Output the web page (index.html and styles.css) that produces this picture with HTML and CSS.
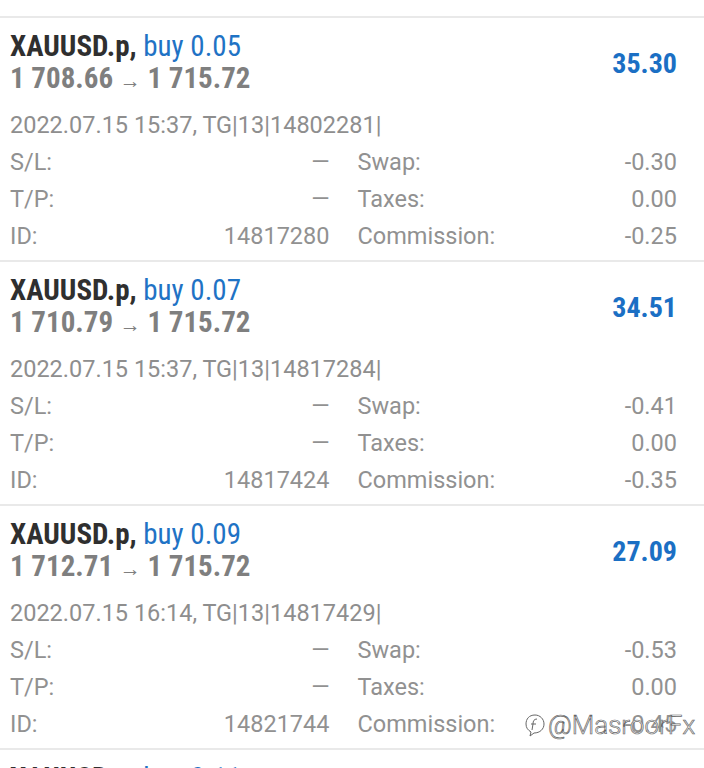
FILE: index.html
```html
<!DOCTYPE html>
<html lang="en">
<head>
    <meta charset="UTF-8">
    <meta name="viewport" content="width=device-width, initial-scale=1.0">
    <title>History</title>
    <link rel="stylesheet" href="styles.css">
</head>
<body>
    <div class="deal-list">
        <div class="deal">
            <div class="deal-head">
                <div class="deal-title">
                    <div class="symbol">XAUUSD.p, <span class="side">buy 0.05</span></div>
                    <div class="prices">1 708.66 <span class="arrow">&rarr;</span> 1 715.72</div>
                </div>
                <div class="profit">35.30</div>
            </div>
            <div class="deal-time">2022.07.15 15:37, TG|13|14802281|</div>
            <div class="deal-info">
                <div class="info-col">
                    <div class="info-row"><span>S/L:</span><span>&mdash;</span></div>
                    <div class="info-row"><span>T/P:</span><span>&mdash;</span></div>
                    <div class="info-row"><span>ID:</span><span>14817280</span></div>
                </div>
                <div class="info-col">
                    <div class="info-row"><span>Swap:</span><span>-0.30</span></div>
                    <div class="info-row"><span>Taxes:</span><span>0.00</span></div>
                    <div class="info-row"><span>Commission:</span><span>-0.25</span></div>
                </div>
            </div>
        </div>

        <div class="deal">
            <div class="deal-head">
                <div class="deal-title">
                    <div class="symbol">XAUUSD.p, <span class="side">buy 0.07</span></div>
                    <div class="prices">1 710.79 <span class="arrow">&rarr;</span> 1 715.72</div>
                </div>
                <div class="profit">34.51</div>
            </div>
            <div class="deal-time">2022.07.15 15:37, TG|13|14817284|</div>
            <div class="deal-info">
                <div class="info-col">
                    <div class="info-row"><span>S/L:</span><span>&mdash;</span></div>
                    <div class="info-row"><span>T/P:</span><span>&mdash;</span></div>
                    <div class="info-row"><span>ID:</span><span>14817424</span></div>
                </div>
                <div class="info-col">
                    <div class="info-row"><span>Swap:</span><span>-0.41</span></div>
                    <div class="info-row"><span>Taxes:</span><span>0.00</span></div>
                    <div class="info-row"><span>Commission:</span><span>-0.35</span></div>
                </div>
            </div>
        </div>

        <div class="deal">
            <div class="deal-head">
                <div class="deal-title">
                    <div class="symbol">XAUUSD.p, <span class="side">buy 0.09</span></div>
                    <div class="prices">1 712.71 <span class="arrow">&rarr;</span> 1 715.72</div>
                </div>
                <div class="profit">27.09</div>
            </div>
            <div class="deal-time">2022.07.15 16:14, TG|13|14817429|</div>
            <div class="deal-info">
                <div class="info-col">
                    <div class="info-row"><span>S/L:</span><span>&mdash;</span></div>
                    <div class="info-row"><span>T/P:</span><span>&mdash;</span></div>
                    <div class="info-row"><span>ID:</span><span>14821744</span></div>
                </div>
                <div class="info-col">
                    <div class="info-row"><span>Swap:</span><span>-0.53</span></div>
                    <div class="info-row"><span>Taxes:</span><span>0.00</span></div>
                    <div class="info-row"><span>Commission:</span><span>-0.45</span></div>
                </div>
            </div>
        </div>

        <div class="deal">
            <div class="deal-head">
                <div class="deal-title">
                    <div class="symbol">XAUUSD.p, <span class="side">buy 0.11</span></div>
                </div>
            </div>
        </div>
    </div>

    <!-- watermark over the last commission value -->
    <div class="watermark">
        <svg width="22" height="24" viewBox="0 0 22 24">
            <path d="M11 2 C5 2 2 6 2 11 C2 15 4 17 7 19 L6 23 L10 20 C16 20 20 16 20 11 C20 6 16 2 11 2 Z" fill="none" stroke="#666" stroke-width="1"/>
            <path d="M13 6 C10 6 9 8 9 11 L8 17 M7 11 L12 11" fill="none" stroke="#666" stroke-width="1"/>
        </svg>
        <span>@MasroorFx</span>
    </div>
</body>
</html>
```

FILE: styles.css
```css
body {
    margin: 0;
    padding-top: 16px;
    background-color: #fff;
    font-family: Roboto, "Noto Sans", sans-serif;
    overflow: hidden;
    height: 752px;
}

.deal {
    border-top: 2px solid #e9e9e9;
    padding: 12px 27px 8px 10px;
    height: 222px;
}

.deal-head {
    display: flex;
    justify-content: space-between;
    align-items: center;
}

.symbol,
.prices {
    font-size: 29px;
    line-height: 32px;
    font-weight: bold;
    font-stretch: 85%;
    white-space: nowrap;
}

.symbol {
    color: #2f2f2f;
}

.side {
    color: #1f73c5;
    font-weight: normal;
}

.prices {
    color: #7f7f7f;
}

.arrow {
    font-size: 21px;
    font-weight: normal;
}

.profit {
    color: #1b6fc4;
    font-size: 28px;
    font-weight: bold;
    font-stretch: 85%;
}

.deal-time {
    margin-top: 10px;
    color: #8e8e8e;
    font-size: 23.5px;
    line-height: 37px;
    white-space: nowrap;
}

.deal-info {
    display: flex;
    gap: 28px;
}

.info-col {
    flex: 1;
}

.info-row {
    display: flex;
    justify-content: space-between;
    color: #919191;
    font-size: 23.5px;
    line-height: 37px;
}

.watermark {
    position: absolute;
    left: 524px;
    top: 710px;
    display: flex;
    align-items: center;
    gap: 2px;
    color: #fff;
    font-size: 26px;
    font-weight: 300;
    -webkit-text-stroke: 0.7px #666;
}
```
